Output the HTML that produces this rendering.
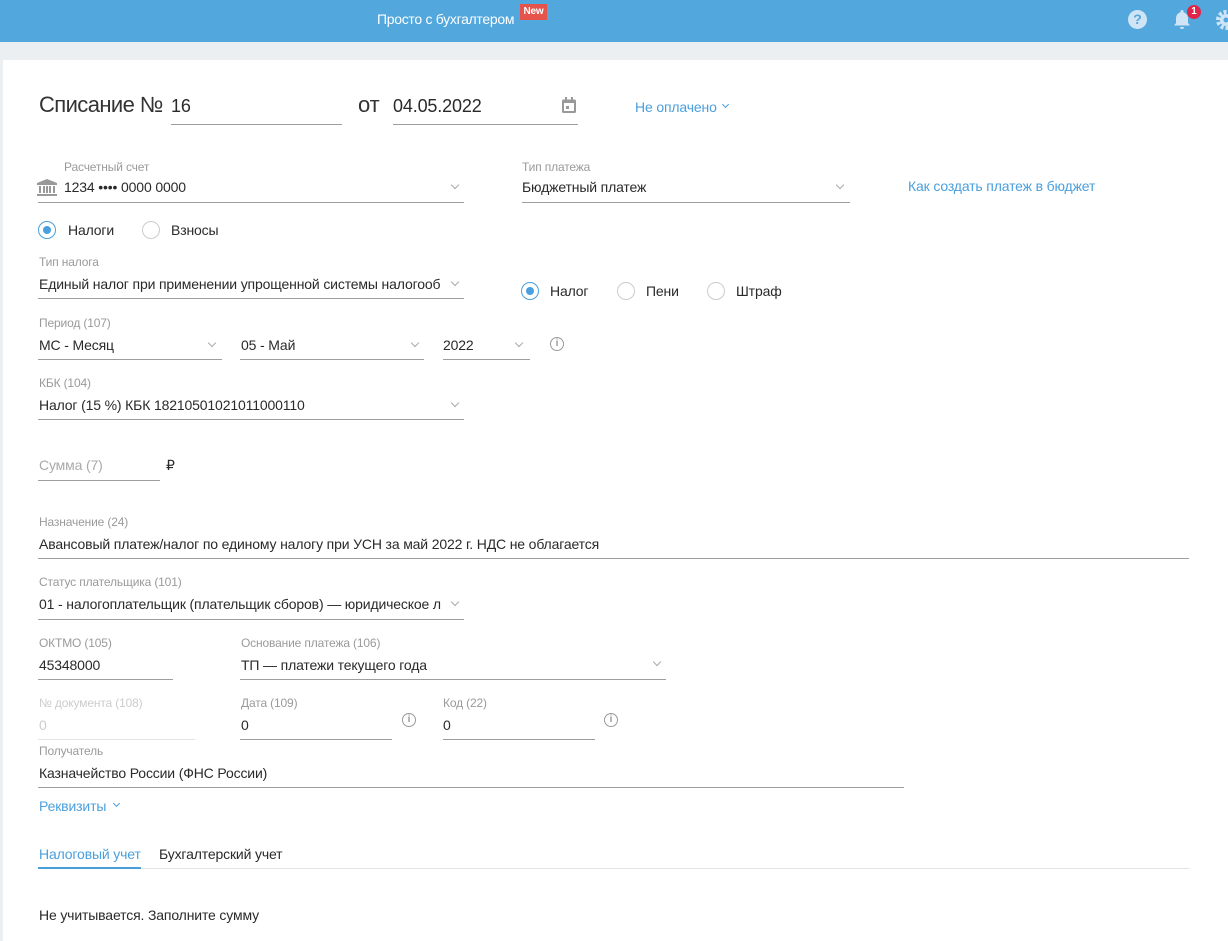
<!DOCTYPE html>
<html><head><meta charset="utf-8"><style>
*{margin:0;padding:0;box-sizing:border-box}
body{width:1228px;height:941px;overflow:hidden;background:#ebeff2;font-family:"Liberation Sans",sans-serif;font-size:14px;color:#2a2a2a;position:relative;letter-spacing:-0.15px}
.a{position:absolute;white-space:nowrap;line-height:18px}
.l{position:absolute;white-space:nowrap;font-size:12px;color:#9a9a9a;line-height:14px}
.u{position:absolute;height:1px;background:#9e9e9e}
.ch{position:absolute;width:6px;height:6px;border-right:1.3px solid #aaa;border-bottom:1.3px solid #aaa;transform:rotate(45deg)}
.r{position:absolute;width:18px;height:18px;border-radius:50%;border:1px solid #ccc;background:#fff}
.r.on{border-color:#4a9fdc}
.r.on:after{content:"";position:absolute;left:4px;top:4px;width:8px;height:8px;border-radius:50%;background:#4a9fdc}
.i{position:absolute;width:14px;height:14px;border-radius:50%;border:1.3px solid #999;font-size:10px;line-height:11px;text-align:center;color:#999;font-weight:bold}
.bl{color:#4a9fdc}
</style></head><body>
<div style="position:absolute;left:0;top:0;width:1228px;height:42px;background:#52a7dd"></div>
<div class="a" style="left:377px;top:10px;color:#fff;font-size:14px;letter-spacing:-0.3px">Просто с бухгалтером</div>
<div class="a" style="left:520px;top:4px;width:27px;height:16px;background:#e5534b;color:#fff;font-size:10px;font-weight:bold;line-height:16px;text-align:center">New</div>
<div style="position:absolute;left:1128px;top:10px;width:19px;height:19px;border-radius:50%;background:#cfe5f6;color:#52a7dd;font-weight:bold;font-size:14px;line-height:19px;text-align:center">?</div>
<svg style="position:absolute;left:1172px;top:9px" width="20" height="22" viewBox="0 0 20 22"><path d="M10 1a1.5 1.5 0 0 1 1.5 1.5v.7A6 6 0 0 1 16 9v5l2 2.5H2L4 14V9a6 6 0 0 1 4.5-5.8v-.7A1.5 1.5 0 0 1 10 1zM8 18h4a2 2 0 0 1-4 0z" fill="#cfe5f6"/></svg>
<div style="position:absolute;left:1187px;top:5px;width:14px;height:14px;border-radius:50%;background:#e0254a;color:#fff;font-size:10px;font-weight:bold;line-height:14px;text-align:center">1</div>
<svg style="position:absolute;left:1215px;top:9px" width="13" height="22" viewBox="0 0 13 22"><circle cx="11" cy="11" r="8" fill="none" stroke="#cfe5f6" stroke-width="4" stroke-dasharray="3 2"/><circle cx="11" cy="11" r="6" fill="#cfe5f6"/><circle cx="11" cy="11" r="2.5" fill="#52a7dd"/></svg>
<div style="position:absolute;left:3px;top:60px;width:1225px;height:881px;background:#fff"></div>

<div class="a" style="left:39px;top:92px;font-size:22px;line-height:26px;color:#333;letter-spacing:-0.6px">Списание №</div>
<div class="a" style="left:171px;top:95px;font-size:18px;line-height:22px">16</div>
<div class="u" style="left:171px;top:124px;width:171px"></div>
<div class="a" style="left:358px;top:92px;font-size:22px;line-height:26px;color:#333">от</div>
<div class="a" style="left:393px;top:95px;font-size:18px;line-height:22px">04.05.2022</div>
<div class="u" style="left:393px;top:124px;width:185px"></div>
<svg style="position:absolute;left:561px;top:97px" width="16" height="17" viewBox="0 0 16 17"><rect x="1" y="2.5" width="14" height="13.5" rx="1.5" fill="#999"/><rect x="3" y="6" width="10" height="8" fill="#fff"/><rect x="4" y="0" width="2" height="4" fill="#999"/><rect x="10" y="0" width="2" height="4" fill="#999"/><rect x="5" y="9" width="3" height="3" fill="#999"/></svg>
<div class="a bl" style="left:635px;top:98px">Не оплачено</div>
<div class="ch" style="left:723px;top:102px;width:5px;height:5px;border-color:#4a9fdc"></div>

<div class="l" style="left:64px;top:160px">Расчетный счет</div>
<svg style="position:absolute;left:37px;top:179px" width="20" height="17" viewBox="0 0 20 17"><path d="M10 0L0 4v2h20V4z M2 7h2v7H2z M6 7h2v7H6z M12 7h2v7h-2z M16 7h2v7h-2z M9 7h2v7H9z M0 15h20v2H0z" fill="#999"/></svg>
<div class="a" style="left:64px;top:178px">1234 •••• 0000 0000</div>
<div class="ch" style="left:452px;top:182px"></div>
<div class="u" style="left:38px;top:202px;width:426px"></div>
<div class="l" style="left:522px;top:160px">Тип платежа</div>
<div class="a" style="left:522px;top:178px">Бюджетный платеж</div>
<div class="ch" style="left:837px;top:182px"></div>
<div class="u" style="left:522px;top:202px;width:328px"></div>
<div class="a bl" style="left:908px;top:177px">Как создать платеж в бюджет</div>

<div class="r on" style="left:38px;top:221px"></div><div class="a" style="left:68px;top:221px">Налоги</div>
<div class="r" style="left:142px;top:221px"></div><div class="a" style="left:171px;top:221px">Взносы</div>

<div class="l" style="left:39px;top:255px">Тип налога</div>
<div class="a" style="left:39px;top:275px">Единый налог при применении упрощенной системы налогооб</div>
<div class="ch" style="left:452px;top:279px"></div>
<div class="u" style="left:38px;top:298px;width:426px"></div>
<div class="r on" style="left:521px;top:282px"></div><div class="a" style="left:550px;top:282px">Налог</div>
<div class="r" style="left:617px;top:282px"></div><div class="a" style="left:646px;top:282px">Пени</div>
<div class="r" style="left:707px;top:282px"></div><div class="a" style="left:736px;top:282px">Штраф</div>

<div class="l" style="left:39px;top:316px">Период (107)</div>
<div class="a" style="left:39px;top:336px">МС - Месяц</div><div class="ch" style="left:209px;top:340px"></div>
<div class="u" style="left:38px;top:359px;width:184px"></div>
<div class="a" style="left:241px;top:336px">05 - Май</div><div class="ch" style="left:412px;top:340px"></div>
<div class="u" style="left:240px;top:359px;width:184px"></div>
<div class="a" style="left:443px;top:336px">2022</div><div class="ch" style="left:516px;top:340px"></div>
<div class="u" style="left:443px;top:359px;width:87px"></div>
<div class="i" style="left:550px;top:337px">i</div>

<div class="l" style="left:39px;top:376px">КБК (104)</div>
<div class="a" style="left:39px;top:396px">Налог (15 %) КБК 18210501021011000110</div>
<div class="ch" style="left:452px;top:400px"></div>
<div class="u" style="left:38px;top:419px;width:426px"></div>

<div class="a" style="left:39px;top:456px;color:#aaa">Сумма (7)</div>
<div class="u" style="left:38px;top:480px;width:122px"></div>
<div class="a" style="left:166px;top:456px">₽</div>

<div class="l" style="left:39px;top:515px">Назначение (24)</div>
<div class="a" style="left:39px;top:535px">Авансовый платеж/налог по единому налогу при УСН за май 2022 г. НДС не облагается</div>
<div class="u" style="left:38px;top:558px;width:1151px"></div>

<div class="l" style="left:39px;top:575px">Статус плательщика (101)</div>
<div class="a" style="left:39px;top:595px">01 - налогоплательщик (плательщик сборов) — юридическое л</div>
<div class="ch" style="left:452px;top:599px"></div>
<div class="u" style="left:38px;top:619px;width:426px"></div>

<div class="l" style="left:39px;top:636px">ОКТМО (105)</div>
<div class="a" style="left:39px;top:656px">45348000</div>
<div class="u" style="left:38px;top:679px;width:135px"></div>
<div class="l" style="left:241px;top:636px">Основание платежа (106)</div>
<div class="a" style="left:241px;top:656px">ТП — платежи текущего года</div>
<div class="ch" style="left:654px;top:659px"></div>
<div class="u" style="left:240px;top:679px;width:426px"></div>

<div class="l" style="left:39px;top:696px;color:#ccc">№ документа (108)</div>
<div class="a" style="left:39px;top:716px;color:#ccc">0</div>
<div class="u" style="left:38px;top:739px;width:157px;background:#e3e3e3"></div>
<div class="l" style="left:241px;top:696px">Дата (109)</div>
<div class="a" style="left:241px;top:716px">0</div>
<div class="u" style="left:240px;top:739px;width:152px"></div>
<div class="i" style="left:402px;top:713px">i</div>
<div class="l" style="left:443px;top:696px">Код (22)</div>
<div class="a" style="left:443px;top:716px">0</div>
<div class="u" style="left:443px;top:739px;width:152px"></div>
<div class="i" style="left:604px;top:713px">i</div>

<div class="l" style="left:39px;top:744px">Получатель</div>
<div class="a" style="left:39px;top:764px">Казначейство России (ФНС России)</div>
<div class="u" style="left:38px;top:787px;width:866px"></div>
<div class="a bl" style="left:39px;top:797px">Реквизиты</div>
<div class="ch" style="left:114px;top:801px;width:5px;height:5px;border-color:#4a9fdc"></div>

<div class="a bl" style="left:39px;top:845px">Налоговый учет</div>
<div class="a" style="left:159px;top:845px">Бухгалтерский учет</div>
<div class="u" style="left:38px;top:868px;width:1151px;background:#e3e3e3"></div>
<div style="position:absolute;left:38px;top:867px;width:103px;height:2px;background:#4a9fdc"></div>
<div class="a" style="left:39px;top:906px">Не учитывается. Заполните сумму</div>
</body></html>
